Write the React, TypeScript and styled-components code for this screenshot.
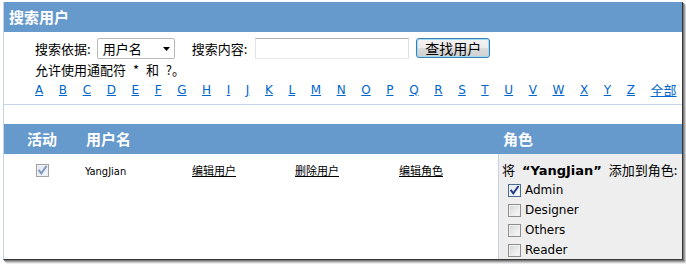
import React from "react";
import styled, { createGlobalStyle } from "styled-components";

const CJK = `"Noto Sans CJK SC", "DejaVu Sans", sans-serif`;
const LATIN = `"DejaVu Sans", "Noto Sans CJK SC", sans-serif`;

const GlobalStyle = createGlobalStyle`
  html, body { margin: 0; padding: 0; background: #fff; }
  body {
    width: 686px; height: 264px; overflow: hidden;
    font-family: ${CJK}; font-size: 13px; color: #000;
  }
  * { box-sizing: border-box; }
`;

const Frame = styled.div`
  margin: 2px 0 0 3px;
  width: 680px;
  height: 258px;
  border-left: 1px solid #c4d5ea;
  border-right: 1px solid #363636;
  border-bottom: 1px solid #363636;
  box-shadow: 1px 1px 0 #7a7a7a, 2px 2px 1px #a0a0a0, 3px 3px 2px #c4c4c4;
  display: flex;
  flex-direction: column;
  overflow: hidden;
`;

const PanelHeader = styled.div`
  height: 30px;
  background: #6699cc;
  color: #fff;
  font: bold 15px/30px ${CJK};
  padding-left: 5px;
`;

const SearchBody = styled.div`
  padding: 6px 0 5px 31px;
  border-bottom: 1px solid #c4d5ea;
`;

const FieldRow = styled.div`
  display: flex;
  align-items: flex-start;
  height: 21px;
`;

const FieldLabel = styled.span<{ $gap?: number }>`
  line-height: 21px;
  margin-left: ${(p) => p.$gap ?? 0}px;
  white-space: nowrap;
`;

const SelectWrap = styled.div`
  position: relative;
  width: 78px;
  height: 21px;
  margin-left: 6px;
`;

const Select = styled.select`
  appearance: none;
  -webkit-appearance: none;
  width: 100%;
  height: 100%;
  border: 1px solid #b9b9b9;
  border-radius: 2px;
  background: #fff;
  font: 13px ${CJK};
  color: #000;
  padding: 0 0 0 5px;
  outline: none;
`;

const SelectArrow = styled.svg`
  position: absolute;
  right: 5px;
  top: 9px;
  pointer-events: none;
`;

const TextInput = styled.input`
  width: 154px;
  height: 21px;
  margin-left: 8px;
  border: 1px solid;
  border-color: #abadb3 #dbdfe6 #e3e9ef #e2e3ea;
  padding: 0 3px;
  font: 13px ${CJK};
  outline: none;
`;

const SearchButton = styled.button`
  width: 74px;
  height: 20px;
  margin-left: 7px;
  border: 1px solid #3c7fb1;
  border-radius: 3px;
  box-shadow: inset 0 0 0 1px #9fdcf6;
  background: linear-gradient(#f4f4f4 0%, #ececec 48%, #dcdcdc 52%, #cfcfcf 100%);
  font: 14px/16px ${CJK};
  color: #000;
  padding: 0;
`;

const HintRow = styled.div`
  line-height: 22px;
  height: 22px;
  white-space: nowrap;
  word-spacing: 4px;
`;

const LetterRow = styled.div`
  display: flex;
  gap: 15.6px;
  height: 18px;
  line-height: 18px;
`;

const LetterLink = styled.a<{ $cjk?: boolean }>`
  color: #0066cc;
  text-decoration: underline;
  font: ${(p) => (p.$cjk ? `13px ${CJK}` : `12px ${LATIN}`)};
  line-height: 18px;
`;

const TableSection = styled.div`
  margin-top: 19px;
  flex: 1;
  display: flex;
  flex-direction: column;
  min-height: 0;
`;

const COLS = "76px 110px 103px 104px 101px 1fr";

const TableHeader = styled.div`
  display: grid;
  grid-template-columns: ${COLS};
  height: 30px;
  background: #6699cc;
  color: #fff;
  font: bold 15px/30px ${CJK};
`;

const HeaderCell = styled.div<{ $pad?: number; $center?: boolean }>`
  padding-left: ${(p) => p.$pad ?? 0}px;
  text-align: ${(p) => (p.$center ? "center" : "left")};
  white-space: nowrap;
`;

const TableRow = styled.div`
  display: grid;
  grid-template-columns: ${COLS};
  flex: 1;
  min-height: 0;
`;

const Cell = styled.div<{ $pad?: number }>`
  padding: 6px 0 0 ${(p) => p.$pad ?? 0}px;
  line-height: 20px;
  white-space: nowrap;
`;

const CheckCell = styled.div`
  display: flex;
  justify-content: center;
  padding-top: 10px;
`;

const UserName = styled.span`
  font: 11px "DejaVu Sans Condensed", "DejaVu Sans", sans-serif;
  line-height: 20px;
`;

const RowLink = styled.a`
  color: #000;
  text-decoration: underline;
  font: 11px ${CJK};
  line-height: 20px;
`;

const RolesCell = styled.div`
  background: #eeeeee;
  border-left: 1px solid #c7d3e3;
  padding: 6px 0 0 3px;
  overflow: hidden;
`;

const RoleHint = styled.div`
  font: 13px/20px ${CJK};
  white-space: nowrap;
  word-spacing: 2px;
`;

const RoleName = styled.b`
  font: bold 13px ${LATIN};
  margin: 0 2px;
`;

const RoleItem = styled.label`
  display: flex;
  align-items: center;
  height: 20px;
  padding-left: 6px;
`;

const RoleLabel = styled.span`
  margin-left: 4px;
  font: 12px/20px ${LATIN};
  color: #000;
`;

type BoxKind = "disabled" | "checked" | "unchecked";

const BoxFrame = styled.span<{ $kind: BoxKind }>`
  display: inline-flex;
  width: 13px;
  height: 13px;
  flex: none;
  border: 1px solid
    ${(p) => (p.$kind === "checked" ? "#4d6a92" : p.$kind === "disabled" ? "#a2a2a2" : "#8e8f8f")};
  background: ${(p) =>
    p.$kind === "disabled"
      ? "linear-gradient(135deg, #dfe6ee, #f4f7fa)"
      : p.$kind === "checked"
      ? "linear-gradient(135deg, #dfe6ef, #fbfcfd)"
      : "linear-gradient(135deg, #d6d6d6, #fbfbfb)"};
  box-shadow: inset 0 0 0 1px
    ${(p) => (p.$kind === "unchecked" ? "#f0f0f0" : "#eef2f6")};
`;

const CheckBox: React.FC<{ kind: BoxKind }> = ({ kind }) => (
  <BoxFrame $kind={kind}>
    {kind !== "unchecked" && (
      <svg width="11" height="11" viewBox="0 0 11 11">
        <path
          d="M2.2 5.6 L4.3 8.4 L9 1.8"
          fill="none"
          stroke={kind === "checked" ? "#1f3a8a" : "#7f93bd"}
          strokeWidth="1.9"
          strokeLinecap="square"
        />
      </svg>
    )}
  </BoxFrame>
);

const LETTERS = "ABCDEFGHIJKLMNOPQRSTUVWXYZ".split("");
const ROLES = [
  { name: "Admin", checked: true },
  { name: "Designer", checked: false },
  { name: "Others", checked: false },
  { name: "Reader", checked: false },
];

export default function App() {
  return (
    <>
      <GlobalStyle />
      <Frame>
        <PanelHeader>搜索用户</PanelHeader>
        <SearchBody>
          <FieldRow>
            <FieldLabel>搜索依据:</FieldLabel>
            <SelectWrap>
              <Select defaultValue="username">
                <option value="username">用户名</option>
                <option value="email">邮箱</option>
              </Select>
              <SelectArrow width="7" height="4" viewBox="0 0 7 4">
                <path d="M0 0 H7 L3.5 4 Z" fill="#000" />
              </SelectArrow>
            </SelectWrap>
            <FieldLabel $gap={17}>搜索内容:</FieldLabel>
            <TextInput type="text" />
            <SearchButton type="button">查找用户</SearchButton>
          </FieldRow>
          <HintRow>允许使用通配符 * 和 ?。</HintRow>
          <LetterRow>
            {LETTERS.map((l) => (
              <LetterLink key={l} href="#">
                {l}
              </LetterLink>
            ))}
            <LetterLink href="#" $cjk>
              全部
            </LetterLink>
          </LetterRow>
        </SearchBody>

        <TableSection>
          <TableHeader>
            <HeaderCell $center>活动</HeaderCell>
            <HeaderCell $pad={6}>用户名</HeaderCell>
            <HeaderCell />
            <HeaderCell />
            <HeaderCell />
            <HeaderCell $pad={5}>角色</HeaderCell>
          </TableHeader>
          <TableRow>
            <CheckCell>
              <CheckBox kind="disabled" />
            </CheckCell>
            <Cell $pad={5}>
              <UserName>YangJian</UserName>
            </Cell>
            <Cell $pad={2}>
              <RowLink href="#">编辑用户</RowLink>
            </Cell>
            <Cell $pad={2}>
              <RowLink href="#">删除用户</RowLink>
            </Cell>
            <Cell $pad={2}>
              <RowLink href="#">编辑角色</RowLink>
            </Cell>
            <RolesCell>
              <RoleHint>
                将 <RoleName>“YangJian”</RoleName> 添加到角色:
              </RoleHint>
              {ROLES.map((r) => (
                <RoleItem key={r.name}>
                  <CheckBox kind={r.checked ? "checked" : "unchecked"} />
                  <RoleLabel>{r.name}</RoleLabel>
                </RoleItem>
              ))}
            </RolesCell>
          </TableRow>
        </TableSection>
      </Frame>
    </>
  );
}
